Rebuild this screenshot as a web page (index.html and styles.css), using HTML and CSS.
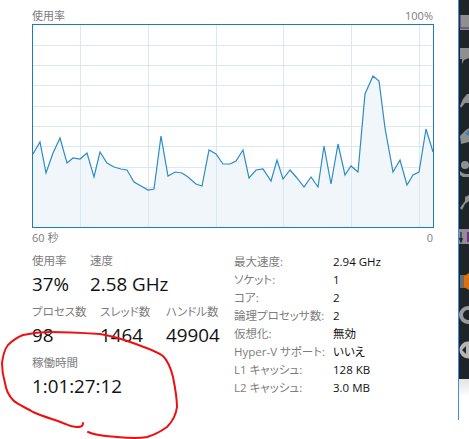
FILE: index.html
```html
<!DOCTYPE html>
<html lang="ja">
<head>
  <meta charset="utf-8"/>
  <title>CPU</title>
  <link rel="stylesheet" href="styles.css">
</head>
<body>

<div class="page">
  <div class="main">
    <div class="chart-top">
      <span>使用率</span>
      <span>100%</span>
    </div>

    <svg class="chart" width="402" height="204" viewBox="32 24 402 204">
      <path class="grid" d="M33 45.5H433M33 65.5H433M33 85.5H433M33 106.5H433M33 126.5H433M33 146.5H433M33 167.5H433M33 187.5H433M33 207.5H433"/>
      <path class="area" d="M33 154L40 142 46 173 53 153 60 138 67 163 73 158 80 159 87 153 94 177 100 152 107 163 114 167 121 169 127 170 134 182 141 186 148 190 154 189 161 136 168 176 175 172 182 173 188 177 196 184 202 186 209 150 216 154 223 164 230 164 236 161 243 150 249 178 256 170 263 169 271 181 277 160 283 179 290 170 297 178 304 187 311 177 318 187 324 146 331 184 338 144 345 175 351 166 358 172 365 94 373 76 379 81 385 128 393 172 400 160 407 185 413 175 419 172 426 129 433 152V227H33Z"/>
      <path class="grid" d="M80.5 25V227M148.5 25V227M216.5 25V227M283.5 25V227M351.5 25V227M419.5 25V227"/>
      <path class="line" d="M33 154L40 142 46 173 53 153 60 138 67 163 73 158 80 159 87 153 94 177 100 152 107 163 114 167 121 169 127 170 134 182 141 186 148 190 154 189 161 136 168 176 175 172 182 173 188 177 196 184 202 186 209 150 216 154 223 164 230 164 236 161 243 150 249 178 256 170 263 169 271 181 277 160 283 179 290 170 297 178 304 187 311 177 318 187 324 146 331 184 338 144 345 175 351 166 358 172 365 94 373 76 379 81 385 128 393 172 400 160 407 185 413 175 419 172 426 129 433 152"/>
      <rect class="frame" x="32.5" y="24.5" width="401" height="203"/>
    </svg>

    <div class="chart-axis">
      <span>60 秒</span>
      <span>0</span>
    </div>

    <div class="details">
      <div class="stats">
        <div class="stat-row">
          <div class="stat stat-usage">
            <div class="label">使用率</div>
            <div class="value">37%</div>
          </div>
          <div class="stat">
            <div class="label">速度</div>
            <div class="value">2.58 GHz</div>
          </div>
        </div>
        <div class="stat-row">
          <div class="stat stat-proc">
            <div class="label">プロセス数</div>
            <div class="value">98</div>
          </div>
          <div class="stat stat-thread">
            <div class="label">スレッド数</div>
            <div class="value">1464</div>
          </div>
          <div class="stat">
            <div class="label">ハンドル数</div>
            <div class="value">49904</div>
          </div>
        </div>
        <div class="stat">
          <div class="label">稼働時間</div>
          <div class="value">1:01:27:12</div>
        </div>
      </div>

      <dl class="specs">
        <dt>最大速度:</dt><dd>2.94 GHz</dd>
        <dt>ソケット:</dt><dd>1</dd>
        <dt>コア:</dt><dd>2</dd>
        <dt>論理プロセッサ数:</dt><dd>2</dd>
        <dt>仮想化:</dt><dd>無効</dd>
        <dt>Hyper-V サポート:</dt><dd>いいえ</dd>
        <dt>L1 キャッシュ:</dt><dd>128 KB</dd>
        <dt>L2 キャッシュ:</dt><dd>3.0 MB</dd>
      </dl>
    </div>
  </div>

  <div class="side">
    <svg class="side-icons" width="10" height="379" viewBox="459 0 10 379">
      <rect class="ico" x="460" y="15" width="9" height="15"/>
      <path d="M460 15V28H469" fill="none" stroke="#5b2a6e" stroke-width="1"/>
      <path class="ico" d="M460 48H469V58L464 60 462 64V59H460Z"/>
      <path class="ico" d="M460 106L463 99 467 94H469V103L465 103 461 108Z"/>
      <path class="ico" d="M460 136L466 130 469 128V142L461 144Z"/>
      <path d="M465 134L469 130V136Z" fill="#3a7fb0"/>
      <circle class="ico" cx="465" cy="165" r="4"/>
      <path class="ico" d="M460 171C463 174 466 174 469 174V177H463L460 175Z"/>
      <path class="ico" d="M460 208L465 201V197L469 195V201L465 204 462 210Z"/>
      <rect x="459" y="229" width="10" height="15" fill="#8d8f94"/>
      <path d="M461 232V242M459.500 238L461 242 462.500 238" fill="none" stroke="#22262b" stroke-width="1.200"/>
      <path d="M468 232V242" fill="none" stroke="#7a2a8c" stroke-width="2"/>
      <rect x="460" y="275" width="5" height="13" fill="#6e6a66"/>
      <path d="M464 276L469 273V290L464 287Z" fill="#d9730f"/>
      <circle cx="468" cy="315" r="7" fill="none" stroke="#9a9a9a" stroke-width="4"/>
      <circle cx="468" cy="350" r="8.500" fill="#b8b6b4"/>
      <path d="M462 350L466 346V354Z" fill="#22262b"/>
    </svg>
  </div>

  <svg class="scribble" width="469" height="439" viewBox="0 0 469 439">
    <path d="M83 423C83 427 80 427 76 427 70 427 66 424 63 423 52 419 42 416 33 412 25 407 18 405 13 400 8 395 6 389 5 383 3 376 2 370 2 363 3 355 4 350 8 345 12 341 18 337 23 335 32 333 41 332 50 332 67 332 84 333 100 334 112 336 122 339 133 343 143 347 155 350 163 356 169 362 171 369 173 377 175 387 177 397 177 407 176 415 172 422 167 427 160 432 154 435 147 437 137 439 127 438 117 437 107 436 97 436 88 432"/>
  </svg>
</div>

</body>
</html>
```

FILE: styles.css
```css
html, body {
  margin: 0;
  height: 100%;
  background-color: #fff;
}

body {
  font-family: "Open Sans", "Noto Sans CJK JP", sans-serif;
  font-feature-settings: "palt";
  overflow: hidden;
}

.page {
  position: relative;
  display: flex;
  width: 469px;
  height: 439px;
  overflow: hidden;
}

.main {
  box-sizing: border-box;
  width: 458px;
  padding: 8px 25px 0 32px;
  flex-shrink: 0;
}

.chart-top, .chart-axis {
  display: flex;
  justify-content: space-between;
  color: #7d7d7d;
  font-size: 11px;
  line-height: 16px;
}

.chart {
  display: block;
}

.chart-axis {
  margin-top: 2px;
  line-height: 15px;
}

.grid {
  fill: none;
  stroke: #d9e8f3;
  stroke-width: 1;
}

.area {
  fill: #f1f6fa;
}

.line {
  fill: none;
  stroke: #2b8cc4;
  stroke-width: 1.200;
}

.frame {
  fill: none;
  stroke: #1a7db5;
  stroke-width: 1;
}

.details {
  display: flex;
  margin-top: 7px;
}

.stats {
  display: flex;
  flex-direction: column;
  gap: 6px;
  width: 202px;
  flex-shrink: 0;
}

.stat-row {
  display: flex;
}

.stat-usage {
  width: 58px;
}

.stat-proc {
  width: 68px;
}

.stat-thread {
  width: 66px;
}

.label {
  color: #7d7d7d;
  font-size: 11.500px;
  line-height: 18px;
  white-space: nowrap;
}

.value {
  margin-top: 2px;
  color: #111;
  font-size: 18.800px;
  line-height: 25px;
  white-space: nowrap;
}

.specs {
  display: grid;
  grid-template-columns: 99px 1fr;
  grid-auto-rows: 18px;
  margin: 1px 0 0;
  font-size: 11.500px;
  line-height: 18px;
}

.specs dt {
  color: #7d7d7d;
  white-space: nowrap;
}

.specs dd {
  margin: 0;
  color: #111;
  white-space: nowrap;
}

.side {
  width: 11px;
  height: 420px;
  border-left: 1px solid #3a8ee6;
  box-sizing: border-box;
  background: linear-gradient(#e2e2e2, #fff 18px) 0 379px no-repeat;
  background-size: 100% 41px;
}

.side-icons {
  display: block;
  background-color: #1f2429;
}

.ico {
  fill: #8f8f8f;
}

.scribble {
  position: absolute;
  left: 0;
  top: 0;
  pointer-events: none;
}

.scribble path {
  fill: none;
  stroke: #ee1010;
  stroke-width: 2;
  stroke-linecap: round;
}
```
